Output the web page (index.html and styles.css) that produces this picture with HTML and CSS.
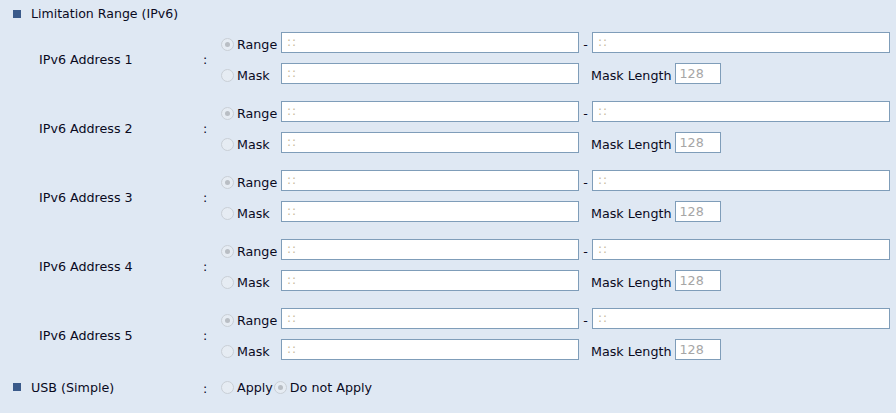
FILE: index.html
```html
<!DOCTYPE html>
<html>
<head>
<meta charset="utf-8">
<link rel="stylesheet" href="styles.css">
</head>
<body>
<div class="page">
  <div class="section">
    <span class="bullet"></span><span class="title">Limitation Range (IPv6)</span>
  </div>

  <div class="addr">
    <div class="label">IPv6 Address 1</div>
    <div class="colon">:</div>
    <div class="lines">
      <div class="line">
        <label class="opt"><span class="radio checked"></span>Range</label>
        <span class="field wide">::</span><span class="dash">-</span><span class="field wide">::</span>
      </div>
      <div class="line">
        <label class="opt"><span class="radio"></span>Mask</label>
        <span class="field wide">::</span><span class="mlabel">Mask Length</span><span class="field short">128</span>
      </div>
    </div>
  </div>

  <div class="addr">
    <div class="label">IPv6 Address 2</div>
    <div class="colon">:</div>
    <div class="lines">
      <div class="line">
        <label class="opt"><span class="radio checked"></span>Range</label>
        <span class="field wide">::</span><span class="dash">-</span><span class="field wide">::</span>
      </div>
      <div class="line">
        <label class="opt"><span class="radio"></span>Mask</label>
        <span class="field wide">::</span><span class="mlabel">Mask Length</span><span class="field short">128</span>
      </div>
    </div>
  </div>

  <div class="addr">
    <div class="label">IPv6 Address 3</div>
    <div class="colon">:</div>
    <div class="lines">
      <div class="line">
        <label class="opt"><span class="radio checked"></span>Range</label>
        <span class="field wide">::</span><span class="dash">-</span><span class="field wide">::</span>
      </div>
      <div class="line">
        <label class="opt"><span class="radio"></span>Mask</label>
        <span class="field wide">::</span><span class="mlabel">Mask Length</span><span class="field short">128</span>
      </div>
    </div>
  </div>

  <div class="addr">
    <div class="label">IPv6 Address 4</div>
    <div class="colon">:</div>
    <div class="lines">
      <div class="line">
        <label class="opt"><span class="radio checked"></span>Range</label>
        <span class="field wide">::</span><span class="dash">-</span><span class="field wide">::</span>
      </div>
      <div class="line">
        <label class="opt"><span class="radio"></span>Mask</label>
        <span class="field wide">::</span><span class="mlabel">Mask Length</span><span class="field short">128</span>
      </div>
    </div>
  </div>

  <div class="addr">
    <div class="label">IPv6 Address 5</div>
    <div class="colon">:</div>
    <div class="lines">
      <div class="line">
        <label class="opt"><span class="radio checked"></span>Range</label>
        <span class="field wide">::</span><span class="dash">-</span><span class="field wide">::</span>
      </div>
      <div class="line">
        <label class="opt"><span class="radio"></span>Mask</label>
        <span class="field wide">::</span><span class="mlabel">Mask Length</span><span class="field short">128</span>
      </div>
    </div>
  </div>

  <div class="usb">
    <div class="usb-label"><span class="bullet"></span><span class="title">USB (Simple)</span></div>
    <div class="colon">:</div>
    <label class="inline"><span class="radio"></span>Apply</label>
    <label class="inline"><span class="radio checked"></span>Do not Apply</label>
  </div>
</div>
</body>
</html>
```

FILE: styles.css
```css
html, body {
  margin: 0;
  padding: 0;
  background: #dfe8f3;
}
.page {
  width: 896px;
  height: 413px;
  font-family: "DejaVu Sans", Verdana, sans-serif;
  font-size: 12.7px;
  color: #0a0a1e;
  overflow: hidden;
}
.section {
  height: 27px;
  display: flex;
  align-items: center;
  padding-left: 13px;
}
.bullet {
  display: inline-block;
  width: 8px;
  height: 8px;
  background: #3a5a8a;
  margin-right: 10px;
  flex: none;
}
.title {
  line-height: 16px;
  padding-top: 1px;
}
.section .title {
  font-size: 12.55px;
}
.addr {
  display: flex;
  align-items: center;
  height: 62px;
  margin-bottom: 7px;
}
.label {
  width: 164px;
  padding-left: 39px;
  padding-top: 2px;
  box-sizing: content-box;
  flex: none;
}
.colon {
  width: 18px;
  flex: none;
  padding-top: 2px;
}
.lines {
  display: flex;
  flex-direction: column;
}
.line {
  height: 31px;
  display: flex;
  align-items: center;
}
.opt {
  width: 60px;
  display: flex;
  align-items: center;
  flex: none;
  padding-top: 4px;
}
.radio {
  width: 11px;
  height: 11px;
  border: 1px solid #c9cfd6;
  border-radius: 50%;
  background: #e6ecf3;
  margin-right: 3px;
  flex: none;
  position: relative;
  box-sizing: content-box;
}
.radio.checked::after {
  content: "";
  position: absolute;
  left: 3px;
  top: 3px;
  width: 5px;
  height: 5px;
  border-radius: 50%;
  background: #b9bec4;
}
.field {
  display: inline-block;
  box-sizing: border-box;
  height: 21px;
  border: 1px solid #7f9db9;
  background: #fff;
  color: #c8b89a;
  padding-left: 5px;
  line-height: 19px;
  font-size: 12px;
  letter-spacing: 1px;
  flex: none;
}
.field.wide {
  width: 298px;
}
.field.short {
  width: 46px;
  color: #a6a6a6;
  letter-spacing: 0;
  padding-left: 3px;
  font-size: 12.7px;
}
.dash {
  width: 13px;
  text-align: center;
  flex: none;
  padding-top: 4px;
}
.mlabel {
  margin-left: 12px;
  margin-right: 4px;
  padding-top: 4px;
}
.usb {
  height: 30px;
  display: flex;
  align-items: center;
}
.usb-label {
  width: 190px;
  padding-left: 13px;
  display: flex;
  align-items: center;
  flex: none;
}
.inline {
  display: flex;
  align-items: center;
  margin-right: 1px;
}
```
